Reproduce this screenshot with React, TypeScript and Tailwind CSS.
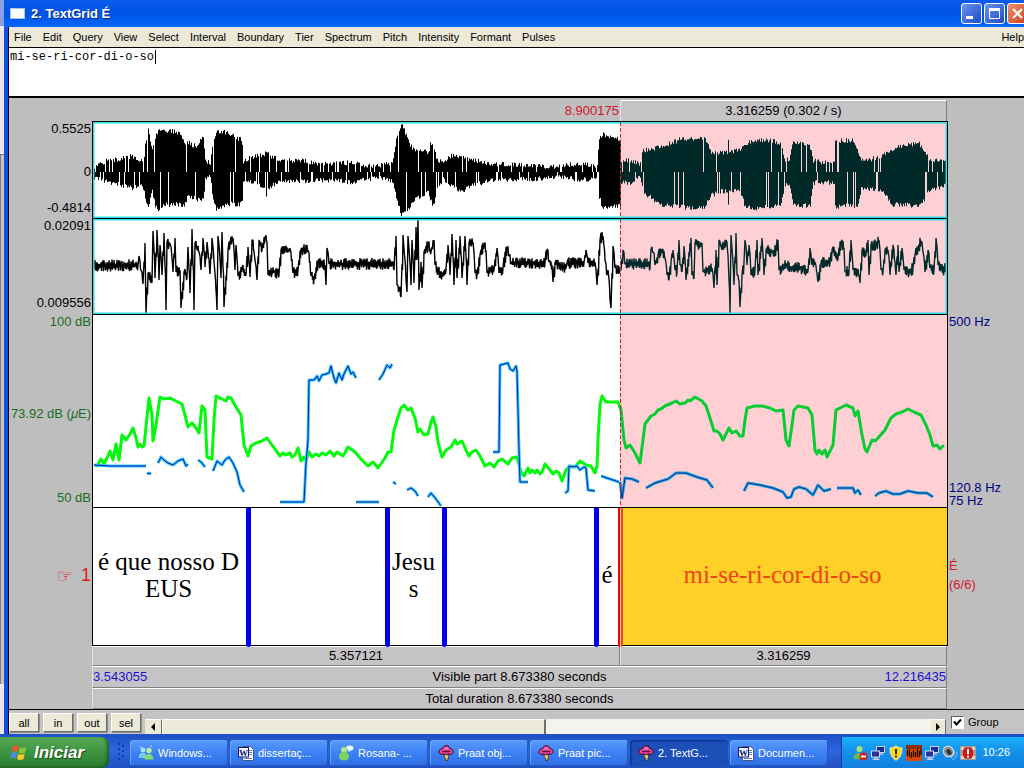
import type { ReactNode } from 'react'

type Point = [number, number]

const menus = [
  'File', 'Edit', 'Query', 'View', 'Select', 'Interval', 'Boundary',
  'Tier', 'Spectrum', 'Pitch', 'Intensity', 'Formant', 'Pulses',
]

const SELECTION = 620

// x, top, bottom of the sound envelope
const envelope: [number, number, number][] = [
  [93, 167, 178], [107, 160, 182], [120, 159, 185], [132, 155, 189], [139, 163, 185], [144, 158, 190],
  [145, 145, 200], [148, 129, 210], [152, 150, 190], [155, 137, 207], [158, 130, 210], [165, 130, 205],
  [180, 132, 205], [184, 143, 207], [188, 142, 196], [197, 147, 200], [200, 137, 201], [203, 138, 200],
  [205, 161, 180], [210, 162, 177], [213, 140, 202], [216, 132, 209], [221, 131, 207], [230, 133, 204],
  [240, 139, 205], [242, 143, 203], [243, 162, 183], [252, 156, 182], [264, 155, 188], [266, 151, 198],
  [268, 154, 188], [272, 157, 186], [281, 160, 182], [300, 160, 182], [320, 163, 181], [340, 163, 181],
  [350, 162, 183], [365, 165, 180], [380, 165, 178], [392, 162, 182], [396, 138, 197], [401, 123, 215],
  [404, 130, 212], [410, 145, 207], [415, 149, 199], [428, 152, 193], [430, 144, 200], [433, 147, 206],
  [437, 159, 190], [443, 162, 180], [453, 154, 188], [461, 157, 192], [475, 160, 185], [490, 163, 181],
  [510, 164, 180], [540, 166, 179], [560, 166, 178], [577, 163, 180], [597, 166, 180], [599, 137, 197],
  [602, 134, 208], [612, 136, 206], [620, 140, 206], [621, 160, 183], [630, 160, 184], [639, 163, 177],
  [643, 150, 192], [655, 148, 202], [665, 145, 206], [680, 139, 207], [695, 138, 209], [705, 139, 207],
  [711, 152, 196], [720, 152, 192], [727, 152, 191], [728, 139, 207], [729, 151, 190], [740, 150, 193],
  [745, 143, 207], [752, 140, 209], [770, 140, 207], [781, 143, 206], [784, 160, 187], [789, 159, 184],
  [793, 142, 204], [800, 141, 207], [810, 147, 205], [813, 160, 183], [830, 163, 183], [834, 159, 183],
  [835, 140, 207], [852, 140, 206], [857, 148, 206], [861, 160, 190], [870, 159, 190], [880, 156, 190],
  [893, 148, 205], [905, 145, 205], [918, 142, 207], [924, 150, 200], [930, 160, 190], [946, 158, 186],
]

const derivative: Point[] = [
  [93, 266], [138, 265], [139, 256], [141, 270], [143, 284], [145, 243], [146, 313], [148, 273], [152, 282],
  [153, 231], [155, 278], [157, 230], [159, 280], [160, 245], [162, 275], [164, 233], [166, 310], [167, 242],
  [171, 246], [173, 272], [175, 238], [176, 272], [180, 270], [181, 308], [184, 272], [187, 277], [188, 247],
  [190, 293], [192, 229], [194, 310], [195, 243], [199, 252], [201, 270], [203, 238], [205, 267], [207, 242],
  [210, 274], [212, 238], [214, 262], [217, 310], [218, 236], [221, 278], [222, 232], [224, 307], [228, 250],
  [230, 243], [233, 238], [235, 270], [236, 245], [238, 276], [242, 268], [246, 275], [248, 247], [250, 277],
  [252, 240], [254, 252], [257, 280], [259, 240], [262, 250], [265, 237], [267, 242], [268, 275], [274, 271],
  [279, 275], [281, 250], [285, 248], [288, 252], [290, 248], [293, 273], [298, 270], [301, 249], [308, 250],
  [311, 276], [314, 280], [318, 262], [325, 265], [326, 285], [327, 248], [329, 264], [340, 264], [392, 264],
  [394, 270], [396, 236], [397, 285], [399, 288], [401, 297], [403, 235], [406, 280], [407, 292], [408, 236],
  [411, 285], [412, 240], [414, 283], [416, 227], [417, 260], [418, 219], [419, 290], [421, 262], [422, 288],
  [424, 252], [428, 245], [431, 252], [434, 240], [435, 265], [438, 272], [443, 276], [446, 270], [448, 245],
  [450, 275], [452, 234], [454, 285], [456, 240], [457, 278], [460, 236], [462, 278], [465, 236], [467, 285],
  [469, 243], [473, 242], [475, 273], [477, 275], [480, 255], [484, 245], [486, 250], [487, 273], [490, 271],
  [494, 270], [497, 248], [499, 273], [503, 268], [507, 247], [509, 255], [511, 263], [545, 263], [547, 249],
  [549, 262], [552, 265], [553, 282], [555, 263], [566, 268], [567, 263], [584, 263], [586, 250], [588, 263],
  [595, 262], [597, 285], [600, 240], [603, 236], [605, 260], [607, 275], [608, 270], [610, 300], [611, 308],
  [613, 246], [615, 268], [620, 271], [621, 270], [623, 250], [625, 264], [648, 264], [650, 268], [651, 249],
  [653, 252], [655, 265], [658, 255], [662, 250], [665, 258], [667, 275], [669, 280], [671, 262], [673, 250],
  [675, 270], [677, 272], [679, 240], [680, 265], [682, 272], [684, 246], [686, 280], [691, 238], [692, 275],
  [694, 278], [695, 243], [700, 245], [702, 243], [703, 272], [707, 270], [712, 268], [714, 288], [716, 250],
  [717, 285], [719, 240], [722, 250], [726, 240], [728, 255], [730, 313], [731, 235], [734, 285], [736, 233],
  [737, 275], [739, 280], [740, 307], [742, 275], [744, 262], [745, 240], [747, 265], [749, 245], [751, 275],
  [755, 270], [757, 240], [758, 275], [762, 238], [764, 275], [766, 250], [772, 252], [776, 250], [778, 240],
  [779, 270], [782, 268], [786, 264], [790, 268], [800, 268], [808, 271], [810, 248], [812, 265], [815, 262],
  [818, 282], [821, 262], [830, 263], [832, 250], [838, 258], [841, 242], [844, 248], [845, 272], [849, 272],
  [851, 240], [853, 270], [859, 275], [860, 283], [862, 250], [866, 255], [868, 240], [869, 275], [871, 245],
  [876, 245], [879, 240], [881, 270], [883, 272], [885, 250], [888, 250], [890, 275], [893, 245], [896, 275],
  [898, 245], [899, 272], [902, 248], [904, 270], [910, 272], [913, 268], [915, 255], [918, 248], [921, 241],
  [923, 252], [925, 272], [928, 250], [930, 268], [934, 270], [936, 238], [938, 265], [944, 272], [946, 265],
]

const intensity =
  '97,466 101,459 104,464 107,458 110,451 113,460 116,444 119,460 122,435 126,440 130,434 133,428 136,438 138,447 140,444 142,447 144,446 149,398 152,415 153,441 156,425 160,397 164,399 170,398 176,401 182,404 185,415 188,427 192,423 196,428 199,433 202,406 205,410 207,457 212,459 214,420 216,396 222,399 226,401 228,397 231,398 236,407 241,415 244,445 248,456 251,446 256,443 262,441 267,438 272,445 280,456 283,453 285,455 290,453 292,457 295,455 298,448 301,461 304,457 306,460 309,452 312,457 316,454 319,456 322,453 326,455 330,451 334,456 337,452 340,454 343,456 348,447 355,452 361,459 364,462 368,466 373,462 378,468 385,458 388,452 391,452 394,430 398,417 401,408 404,405 408,410 411,408 415,418 418,432 420,429 424,435 428,434 431,422 433,417 436,427 438,442 442,457 446,450 451,447 455,440 457,444 462,441 466,450 469,456 472,452 476,450 480,456 485,466 490,463 494,467 498,461 502,459 508,464 512,458 517,457 521,472 524,476 528,468 530,473 532,470 535,473 537,470 540,474 542,472 545,464 550,470 553,474 556,471 559,473 562,481 566,470 570,466 575,467 580,461 586,465 591,466 595,473 597,466 598,440 600,405 602,396 606,402 612,402 618,402 620,407'

const selectedIntensity =
  '620,407 621,410 624,440 626,448 630,445 635,453 640,463 643,440 645,424 651,416 655,414 658,410 661,409 665,406 672,403 676,401 680,404 685,403 688,400 690,401 695,397 702,401 706,406 709,415 714,431 717,431 720,434 723,440 729,428 732,433 736,431 740,436 743,436 745,420 747,408 755,406 762,406 770,408 776,411 783,410 786,440 789,446 792,425 794,410 798,406 808,408 812,415 815,450 817,454 819,450 822,454 825,450 827,457 833,445 836,410 842,407 846,405 853,408 855,416 858,411 862,435 865,449 867,452 872,440 875,441 878,438 885,430 891,418 896,414 902,412 908,409 914,412 921,415 926,425 930,435 933,446 937,445 940,449 943,446'

const pitch = [
  '94,465 110,466 146,466',
  '147,474 149,473 151,474',
  '158,463 161,457 164,460 168,463 173,465 178,461 183,459 186,466 188,464',
  '198,460 201,462 205,467',
  '213,471 217,461 222,465 225,460 229,457 233,463 237,472 240,485 244,492',
  '280,502 304,502 306,463 308,440 309,380 314,380 317,376 319,381 322,375 326,374 329,373 331,366 334,378 336,383 339,373 342,380 344,374 348,366 351,374 353,372 356,378',
  '379,380 383,374 387,365 390,368 392,364',
  '393,482 396,484',
  '407,490 411,488 415,491 418,496',
  '428,497 431,493 436,499 441,506',
  '356,502 379,502',
  '493,452 499,452 500,365 504,364 508,363 510,369 513,371 516,366 517,371 518,410 519,450 520,482 528,482',
  '565,493 568,491 569,466 572,467 577,466 580,470 584,467 586,468 588,490 595,491',
  '601,476 610,479 619,482',
]

const selectedPitch = [
  '620,482 622,498 625,478 632,479 639,482',
  '646,488 655,483 668,479 676,473 686,473 697,477 707,480 713,488',
  '744,491 748,483 760,485 773,488 783,492 787,498 791,497 794,489 799,487 806,489 813,495 818,485 824,491 831,489',
  '837,488 853,488 855,493 858,490 861,495',
  '875,496 879,493 886,491 893,494 900,494 908,491 918,493 927,493 933,497',
]

// repeatable noise in the range 0..1
function noise(n: number) {
  const v = Math.sin(n * 127.1 + 11.7) * 43758.5453
  return v - Math.floor(v)
}

function wavePath(from: number, to: number) {
  let d = ''
  for (let i = 0; i < envelope.length - 1; i++) {
    const [x0, t0, b0] = envelope[i]
    const [x1, t1, b1] = envelope[i + 1]
    for (let x = x0; x < x1; x++) {
      if (x < from || x >= to) continue
      const k = (x - x0) / (x1 - x0)
      const top = t0 + (t1 - t0) * k - 2 + noise(x) * 5
      const bottom = b0 + (b1 - b0) * k + 2 - noise(x + 900) * 5
      const slit = noise(x + 3000)
      const rate = bottom - top > 45 ? 0.045 : 0.09
      const start = slit < rate ? 172 : top
      const end = slit > 1 - rate ? 172 : bottom
      d += `M${x + 0.5} ${start.toFixed(1)}V${end.toFixed(1)}`
    }
  }
  return d
}

function derivativePath(from: number, to: number) {
  const points: string[] = []
  for (let i = 0; i < derivative.length - 1; i++) {
    const [x0, y0] = derivative[i]
    const [x1, y1] = derivative[i + 1]
    if (x0 < from || x0 >= to) continue
    points.push(`${x0},${y0}`)
    if (x1 - x0 < 2) continue
    for (let x = x0 + 1; x < x1; x++) {
      const y = y0 + ((y1 - y0) * (x - x0)) / (x1 - x0)
      points.push(`${x},${(y - 1 - noise(x) * 5).toFixed(1)}`)
      points.push(`${x + 0.5},${(y + 1 + noise(x + 70) * 5).toFixed(1)}`)
    }
  }
  return points.join(' ')
}

function Plot({ y, height, framed, children }: { y: number; height: number; framed?: boolean; children: ReactNode }) {
  return (
    <svg className="block h-full w-full" viewBox={`93 ${y} 854 ${height}`} preserveAspectRatio="none" fill="none">
      <rect x={SELECTION} y={y} width={947 - SELECTION} height={height} fill="#ffd0d3" />
      {children}
      {framed && (
        <rect x="93" y={y} width="854" height={height} stroke="#2fdde4" strokeWidth="3" />
      )}
      <path d={`M620.5 ${y}v${height}`} stroke="#d8203c" strokeDasharray="4 2" />
    </svg>
  )
}

function PitchTrack({ tracks, halo, core }: { tracks: string[]; halo: string; core: string }) {
  return (
    <>
      {tracks.map((points) => (
        <g key={points} strokeLinejoin="round">
          <polyline points={points} stroke={halo} strokeWidth="3" />
          <polyline points={points} stroke={core} strokeWidth="1" />
        </g>
      ))}
    </>
  )
}

function Interval({ children }: { children?: ReactNode }) {
  return (
    <div className="relative flex items-center justify-center pr-1 pb-1 text-center">
      <span className="whitespace-nowrap">{children}</span>
      <span className="absolute top-0 -right-[3px] -bottom-[2px] z-10 w-[5px] rounded-b-sm bg-[#0000f0]" />
    </div>
  )
}

function TimeButton({ children, className = 'block' }: { children: ReactNode; className?: string }) {
  return (
    <button
      className={`h-full w-full border-t border-r border-b border-l border-t-white border-r-[#808080] border-b-[#808080] border-l-[#e4e2e4] bg-[#c6c3c6] text-[13px] leading-4 ${className}`}
    >
      {children}
    </button>
  )
}

function ZoomButton({ children }: { children: ReactNode }) {
  return (
    <button className="h-[19px] w-[30px] border border-t-white border-r-[#716f64] border-b-[#716f64] border-l-white bg-[#ece9d8] text-[11px] leading-4 shadow-[1px_1px_0_#8f8d90]">
      {children}
    </button>
  )
}

function PraatIcon() {
  return (
    <svg className="h-4 w-4 shrink-0" viewBox="0 0 16 16">
      <path d="M5.500 9h5.500l-1 2 .5 1-1 3.500H7.500l.5-2-1.500-1.500z" fill="#f5d67a" stroke="#3c2408" strokeWidth=".8" />
      <path d="M.5 7.500 2 4.500 5 3 6.500.8h3.500L11.500 3l3 1.500 1 3-2.500 1.800-3-.3-2 1-2-1-3 .3z" fill="#e8489c" stroke="#2c0418" strokeWidth=".9" />
      <path d="M4 6.500h8.500" stroke="#5c0c34" strokeWidth="1.400" />
      <path d="M6.500 3.500h3.500" stroke="#ff9cd0" strokeWidth="1.200" />
    </svg>
  )
}

function WordIcon() {
  return (
    <svg className="h-4 w-4 shrink-0" viewBox="0 0 16 16">
      <path d="M4.500 1.500h8l3 3v11h-11z" fill="#fff" stroke="#46558c" />
      <path d="M11 5.500h3M11 7.500h3M11 9.500h3M6 13.500h8" stroke="#6878b8" />
      <rect x=".5" y="2.500" width="10" height="9.500" fill="#f2f4ff" stroke="#101c78" />
      <text x="5.500" y="10.500" textAnchor="middle" fill="#101c78" fontSize="9" fontWeight="bold" fontFamily="Liberation Serif, serif">W</text>
    </svg>
  )
}

function MessengerIcon() {
  return (
    <svg className="h-4 w-4 shrink-0" viewBox="0 0 16 16">
      <circle cx="5" cy="5" r="2.500" fill="#a0e0f4" />
      <path d="M.5 13c0-7 8.500-7 8.500 0z" fill="#78ccec" />
      <circle cx="11" cy="5.500" r="2.700" fill="#b8f09c" />
      <path d="M6.500 14.500c0-7.500 9-7.500 9 0z" fill="#84dc70" />
      <path d="m2 1.500 2 1.500M12.500 1.500 14 .5" stroke="#c8f0ff" />
    </svg>
  )
}

function ChatIcon() {
  return (
    <svg className="h-4 w-4 shrink-0" viewBox="0 0 16 16">
      <circle cx="6" cy="5" r="3" fill="#a8ec84" />
      <path d="M1 12c0-7 10-7 10 0 0 4.500-10 4.500-10 0z" fill="#7cd45c" />
      <path d="M8.500 2c1-2 6.500-2 7 1 0 2-1.500 2.500-3 2.500l-2 2V5c-1.500-.5-2.200-1.500-2-3z" fill="#f0faff" />
    </svg>
  )
}

function NetworkIcon() {
  return (
    <svg className="h-4 w-4" viewBox="0 0 16 16">
      <rect x="6" y="1" width="9" height="7" fill="#c8d0e8" />
      <rect x="7" y="2" width="7" height="5" fill="#1c2c94" />
      <path d="M9 8h4v2H9z" fill="#a8b0c8" />
      <rect x="1" y="5.500" width="9" height="7" fill="#d4dcf0" />
      <rect x="2" y="6.500" width="7" height="5" fill="#24349c" />
      <path d="M4 12.500h4v1.200h1.500V15h-7v-1.300H4z" fill="#c0c8dc" />
    </svg>
  )
}

function StartFlag() {
  return (
    <svg className="h-[18px] w-[18px]" viewBox="0 0 18 18">
      <path d="M3 2.500c2-1.300 4-1.200 5.800 0L7.500 8c-2-1.200-3.800-1.200-5.800 0z" fill="#f0582c" />
      <path d="M10 3c2 1.200 4 1.200 6.300 0L15 8.500c-2 1.200-4.200 1.200-6.300 0z" fill="#84c83c" />
      <path d="M1.500 9.200c2-1.200 3.800-1.200 5.700 0L6 14.700c-2-1.200-3.800-1.200-5.800 0z" fill="#4c8cf0" />
      <path d="M8.400 9.700c2.100 1.200 4.200 1.200 6.300 0L13.500 15c-2.200 1.300-4.300 1.300-6.400 0z" fill="#fcc824" />
    </svg>
  )
}

function TrayIcons() {
  return (
    <div className="flex gap-0.5">
      <svg className="h-4 w-4" viewBox="0 0 16 16">
        <circle cx="7.500" cy="4" r="3" fill="#a8e078" />
        <path d="M1.500 14c0-8 11-8 11 0z" fill="#68bc48" />
        <circle cx="11.500" cy="11.500" r="4" fill="#d42020" />
        <path d="M9 11.500h5" stroke="#fff" strokeWidth="1.800" />
      </svg>
      <NetworkIcon />
      <svg className="h-4 w-4" viewBox="0 0 16 16">
        <path d="M8 .8c2 1.500 4 2 6 2 0 6-1.500 10-6 12.500C3.500 12.800 2 8.800 2 2.800c2 0 4-.5 6-2z" fill="#fcd820" stroke="#e8e4c0" />
        <path d="M8 4v5M8 10.500v2" stroke="#302800" strokeWidth="2" />
      </svg>
      <svg className="h-4 w-4" viewBox="0 0 16 16">
        <path d="M0 0h16v16H0z" fill="#d44810" />
        <path d="M0 0h16v4H0z" fill="#8c2c08" />
        <path d="M1.500 5v6M3.500 4v8M5.500 7v6M7.500 5v7M9.500 7v5M11.500 4v8M13.500 6v6M15 4v6" stroke="#1c0800" strokeWidth="1.200" />
      </svg>
      <NetworkIcon />
      <svg className="h-4 w-4" viewBox="0 0 16 16" fill="none">
        <ellipse cx="6.500" cy="6.500" rx="5" ry="5.500" fill="#8c9098" stroke="#e0e4e8" transform="rotate(-35 6.500 6.500)" />
        <ellipse cx="7" cy="7" rx="2.200" ry="3.200" fill="#30343c" transform="rotate(-35 7 7)" />
        <path d="M12 6c1.500 2.500 0 5.500-3 6.500M14.500 6.500c1.500 4-1 7-4.500 8.500" stroke="#90c4ff" />
      </svg>
      <svg className="h-4 w-4" viewBox="0 0 16 16">
        <path d="M0 1h16v14H0z" fill="#a49c98" />
        <path d="M1 2h3v3H1zM12 2h3v3h-3zM1 11h3v3H1zM12 11h3v3h-3z" fill="#e4dcd4" />
        <path d="M5 2.500h6L13 5v6l-2 2.500H5L3 11V5z" fill="#d01c14" />
        <path d="M8 4v5M8 10.500v2" stroke="#fff" strokeWidth="2" />
      </svg>
    </div>
  )
}

function TaskButton({ icon, label, active }: { icon: ReactNode; label: string; active?: boolean }) {
  const look = active
    ? 'bg-[#1c4fb8] shadow-[inset_1px_1px_2px_#0c2c78]'
    : 'bg-linear-to-b from-[#5c9cfc] via-[#3c80f4] to-[#2f6fe4] shadow-[inset_1px_1px_0_#68a4fc,inset_-1px_-1px_0_#2458c4]'
  return (
    <button className={`flex h-[26px] w-[98px] items-center gap-1 rounded-sm pl-2 text-[11px] text-white ${look}`}>
      {icon}
      <span className="whitespace-nowrap">{label}</span>
    </button>
  )
}

function TitleBar() {
  const frame = 'flex h-[21px] w-[21px] shrink-0 items-center justify-center rounded-[3px] border border-white'
  return (
    <header className="flex h-[27px] items-center overflow-hidden rounded-tl-md bg-linear-to-b from-[#0a5cf0] via-[#0054e3] to-[#0466fc]">
      <span className="ml-1.5 h-[11px] w-[15px] border border-[#a8c8f0] bg-white" />
      <h1 className="ml-1.5 grow text-[13px] font-bold text-white [text-shadow:1px_1px_0_#0a2c8c]">2. TextGrid É</h1>
      <div className="-mr-[4px] flex gap-0.5">
        <button aria-label="Minimize" className={`${frame} bg-linear-to-br from-[#6c94f4] to-[#1c48c8]`}>
          <svg className="h-[13px] w-[13px]" viewBox="0 0 13 13"><path d="M1 9h7v3H1z" fill="#fff" /></svg>
        </button>
        <button aria-label="Maximize" className={`${frame} bg-linear-to-br from-[#6c94f4] to-[#1c48c8]`}>
          <svg className="h-[13px] w-[13px]" viewBox="0 0 13 13" fill="none"><path d="M1.500 2v9.500h10V2z" stroke="#fff" /><path d="M1 2.500h11" stroke="#fff" strokeWidth="3" /></svg>
        </button>
        <button aria-label="Close" className={`${frame} bg-linear-to-br from-[#f09070] to-[#c83c14]`}>
          <svg className="h-[13px] w-[13px]" viewBox="0 0 13 13"><path d="m2 2 9 9M11 2l-9 9" stroke="#fff" strokeWidth="2.200" /></svg>
        </button>
      </div>
    </header>
  )
}

function Editor() {
  const left = 'flex flex-col items-end justify-between pr-px pt-px text-[13px] leading-[14px] whitespace-nowrap'
  const plot = 'min-h-0 border-x border-t border-black bg-white'
  return (
    <main className="grid min-h-0 flex-1 grid-cols-[83px_minmax(0,1fr)_76px] grid-rows-[23px_minmax(0,97fr)_minmax(0,96fr)_minmax(0,193fr)_minmax(0,139fr)_20px_22px_21px] bg-[#bebebe]">
      <div />
      <div className="grid grid-cols-[528fr_327fr] pt-0.5 pr-px">
        <span className="pr-px text-right text-[13px] leading-[22px] text-[#d8142c]">8.900175</span>
        <TimeButton>3.316259 (0.302 / s)</TimeButton>
      </div>
      <div />

      <div className={`${left} pb-[3px]`}>
        <span>0.5525</span>
        <span className="pt-1.5">0</span>
        <span>-0.4814</span>
      </div>
      <div className={plot}>
        <Plot y={122} height={96} framed>
          <path d={wavePath(93, SELECTION)} stroke="#000" />
          <path d={wavePath(SELECTION, 947)} stroke="#002a2a" />
        </Plot>
      </div>
      <div />

      <div className={`${left} pb-1`}>
        <span>0.02091</span>
        <span>0.009556</span>
      </div>
      <div className={plot}>
        <Plot y={219} height={95} framed>
          <g strokeWidth="1.400" strokeLinejoin="bevel">
            <polyline points={derivativePath(93, SELECTION)} stroke="#000" />
            <polyline points={derivativePath(SELECTION, 947)} stroke="#002a2a" />
          </g>
        </Plot>
      </div>
      <div />

      <div className={`${left} pb-0.5 text-[#1c6c24]`}>
        <span>100 dB</span>
        <span className="pt-2">73.92 dB (<i>μ</i>E)</span>
        <span>50 dB</span>
      </div>
      <div className={plot}>
        <Plot y={315} height={192}>
          <g strokeWidth="3" strokeLinejoin="round" strokeLinecap="round">
            <polyline points={intensity} stroke="#00fa0a" />
            <polyline points={selectedIntensity} stroke="#08cc34" />
          </g>
          <PitchTrack tracks={pitch} halo="#30c4ff" core="#0820a0" />
          <PitchTrack tracks={selectedPitch} halo="#20a4dc" core="#083098" />
        </Plot>
      </div>
      <div className="flex flex-col pt-px pl-px text-[13px] leading-[13px] text-[#000080]">
        <span className="grow leading-[14px]">500 Hz</span>
        <span>120.8 Hz</span>
        <span>75 Hz</span>
      </div>

      <div className="flex items-center justify-end gap-2 pr-px pb-0.5 text-[18px] text-[#e01818]">
        <span className="font-['DejaVu_Sans'] font-bold">☞</span>
        <span>1</span>
      </div>
      <div className="grid min-h-0 grid-cols-[155fr_139fr_57fr_152fr_24fr_327fr] border border-black bg-white font-['Liberation_Serif',serif] text-[25px] leading-[27px]">
        <Interval>é que nosso D<br />EUS</Interval>
        <Interval />
        <Interval>Jesu<br />s</Interval>
        <Interval />
        <div className="relative flex items-center justify-center pr-0.5 pb-1">
          <span>é</span>
          <span className="absolute top-0 -right-[3px] -bottom-[2px] z-10 w-[5px] rounded-b-sm border-x-2 border-l-[#f00000] border-r-[#e84c10] bg-[#ffc8b8]" />
        </div>
        <div className="flex items-center justify-center bg-[#ffd028] pr-0.5 pb-1 text-[#ee4410]">mi-se-ri-cor-di-o-so</div>
      </div>
      <div className="flex flex-col justify-center pb-1 pl-px text-[13px] leading-[19px] text-[#d8142c]">
        <span>É</span>
        <span>(6/6)</span>
      </div>

      <div />
      <div className="grid grid-cols-[528fr_327fr] pr-px">
        <TimeButton>5.357121</TimeButton>
        <TimeButton>3.316259</TimeButton>
      </div>
      <div />

      <div />
      <div className="pr-px">
        <TimeButton className="grid grid-cols-[1fr_auto_1fr] items-center">
          <span className="text-left text-[#1c10d0]">3.543055</span>
          <span>Visible part 8.673380 seconds</span>
          <span className="text-right text-[#1c10d0]">12.216435</span>
        </TimeButton>
      </div>
      <div />

      <div />
      <div className="pr-px">
        <TimeButton>Total duration 8.673380 seconds</TimeButton>
      </div>
      <div />
    </main>
  )
}

function BottomBar() {
  return (
    <div className="flex h-[25px] shrink-0 border-t border-black bg-[#c6c3c6] text-[11px]">
      <div className="flex gap-1 pt-[3px]">
        <ZoomButton>all</ZoomButton>
        <ZoomButton>in</ZoomButton>
        <ZoomButton>out</ZoomButton>
        <ZoomButton>sel</ZoomButton>
      </div>
      <div className="mt-[9px] ml-1 flex grow bg-[#f4f3ee]">
        <button aria-label="Scroll left" className="flex w-[17px] items-center justify-center border-t border-r border-t-white border-r-[#716f64] bg-[#ece9d8]">
          <svg className="h-2 w-1.5" viewBox="0 0 6 8"><path d="M5 0v8L1 4z" /></svg>
        </button>
        <button aria-label="Scroll position" className="w-[48%] border-t border-r-2 border-l border-t-white border-r-[#716f64] border-l-white bg-[#ece9d8]" />
        <span className="grow" />
        <button aria-label="Scroll right" className="flex w-[15px] items-center justify-center border-t border-r border-t-white border-r-[#716f64] bg-[#ece9d8]">
          <svg className="h-2 w-1.5" viewBox="0 0 6 8"><path d="M1 0v8l4-4z" /></svg>
        </button>
      </div>
      <label className="flex w-[78px] items-center gap-1 pl-[5px]">
        <span className="relative flex h-[13px] w-[13px]">
          <input type="checkbox" defaultChecked className="peer h-[13px] w-[13px] appearance-none border border-t-[#606060] border-r-white border-b-white border-l-[#606060] bg-white" />
          <svg className="pointer-events-none absolute inset-0 hidden h-[13px] w-[13px] peer-checked:block" viewBox="0 0 13 13" fill="none">
            <path d="m3 5.500 2.500 3L10 3.500" stroke="#000" strokeWidth="2" />
          </svg>
        </span>
        Group
      </label>
    </div>
  )
}

function Taskbar() {
  return (
    <footer className="flex h-[34px] shrink-0 items-end overflow-hidden bg-linear-to-b from-[#1c50c4] via-[#2c66e0] to-[#2050c0]">
      <button className="flex h-[31px] w-[109px] items-center gap-1.5 rounded-r-lg bg-linear-to-b from-[#58a858] via-[#3c9440] to-[#2c7c30] pl-2.5 text-[17px] font-bold text-white italic shadow-[inset_-2px_-1px_3px_#1c5c20] [text-shadow:1px_1px_1px_#1c4c1c]">
        <StartFlag />
        Iniciar
      </button>
      <svg className="mb-1.5 ml-2 h-5 w-2" viewBox="0 0 8 20" fill="#163c9c">
        <path d="M1 1h2v2H1zM5 3h2v2H5zM1 6h2v2H1zM5 8h2v2H5zM1 11h2v2H1zM5 13h2v2H5zM1 16h2v2H1z" />
      </svg>
      <div className="mb-0.5 ml-[5px] flex grow gap-0.5">
        <TaskButton icon={<MessengerIcon />} label="Windows..." />
        <TaskButton icon={<WordIcon />} label="dissertaç..." />
        <TaskButton icon={<ChatIcon />} label="Rosana- ..." />
        <TaskButton icon={<PraatIcon />} label="Praat obj..." />
        <TaskButton icon={<PraatIcon />} label="Praat pic..." />
        <TaskButton icon={<PraatIcon />} label="2. TextG..." active />
        <TaskButton icon={<WordIcon />} label="Documen..." />
      </div>
      <div className="flex h-[31px] w-[183px] items-center justify-between border-l border-[#0c3c98] bg-linear-to-b from-[#18b0f8] via-[#1490ec] to-[#1080dc] pr-3.5 pl-2.5 text-[11px] text-white">
        <TrayIcons />
        <time>10:26</time>
      </div>
    </footer>
  )
}

export default function App() {
  return (
    <div className="flex h-screen flex-col overflow-hidden font-['Liberation_Sans',Arial,sans-serif] text-black">
      <div className="flex min-h-0 flex-1">
        <div className="flex w-1 flex-col bg-[#ece9e4]">
          <span className="h-[26px] bg-[#8ca0e4]" />
          <span className="mt-32 h-[530px] border-t border-l border-[#807c80] bg-[#c6c3c6]" />
        </div>
        <div className="flex min-w-0 flex-1 flex-col bg-[#0c50e4]">
          <TitleBar />
          <div className="ml-1 flex min-h-0 flex-1 flex-col border-l border-black bg-white">
            <nav className="flex h-5 shrink-0 items-center gap-[11px] bg-[#ece9d8] pl-[5px] text-[11px]">
              {menus.map((menu) => (
                <button key={menu} className="h-full">{menu}</button>
              ))}
              <button className="ml-auto h-full">Help</button>
            </nav>
            <div className="relative h-[51px] shrink-0 border-t border-b-2 border-black">
              <textarea
                aria-label="Interval text"
                defaultValue="mi-se-ri-cor-di-o-so"
                className="block h-full w-full resize-none bg-white pt-0.5 pl-px font-['Liberation_Mono',monospace] text-[12px] leading-[14px] outline-none"
              />
              <span className="absolute top-0.5 left-[146px] h-3.5 w-px bg-black" />
            </div>
            <Editor />
            <BottomBar />
          </div>
        </div>
      </div>
      <Taskbar />
    </div>
  )
}
